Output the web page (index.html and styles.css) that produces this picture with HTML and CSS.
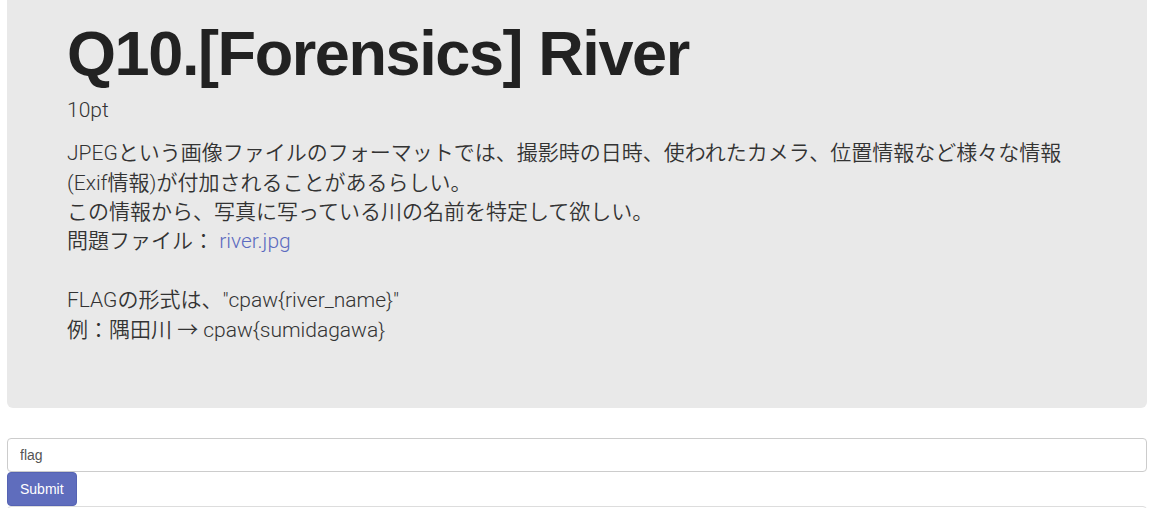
FILE: index.html
```html
<!DOCTYPE html>
<html lang="ja">
<head>
<meta charset="utf-8">
<title>Q10.[Forensics] River</title>
<link rel="stylesheet" href="styles.css">
</head>
<body>
<div class="page">
  <div class="jumbotron">
    <h1 class="title">Q10.[Forensics] River</h1>
    <p class="points">10pt</p>
    <p class="desc">JPEGという画像ファイルのフォーマットでは、撮影時の日時、使われたカメラ、位置情報など様々な情報(Exif情報)が付加されることがあるらしい。<br>この情報から、写真に写っている川の名前を特定して欲しい。<br>問題ファイル： <a class="link" href="#">river.jpg</a><br><br>FLAGの形式は、"cpaw{river_name}"<br>例：隅田川 <span class="arrow">→</span> cpaw{sumidagawa}</p>
  </div>
  <form class="flag-form">
    <input class="flag-input" type="text" placeholder="flag">
    <button class="btn-submit" type="button">Submit</button>
  </form>
  <div class="next-box"></div>
</div>
</body>
</html>
```
FILE: styles.css
```css
html, body {
  margin: 0;
  padding: 0;
  background: #ffffff;
}
body {
  font-family: "Liberation Sans", "Noto Sans CJK JP", sans-serif;
  color: #333333;
  font-size: 14px;
  line-height: 1.42857;
}
.page {
  padding: 0 9px 0 7px;
}
.jumbotron {
  background: #e9e9e9;
  border-radius: 0 0 6px 6px;
  padding: 18.5px 60px 48px 60px;
  margin-bottom: 30px;
}
.title {
  margin: 0 0 8px 0;
  font-size: 63px;
  line-height: 1.1;
  font-weight: 700;
  letter-spacing: -1.4px;
  color: #222222;
}
.points, .desc {
  font-family: Roboto, "Noto Sans CJK JP", sans-serif;
  font-size: 21px;
  line-height: 1.4;
  font-weight: 350;
  margin: 0 0 15px 0;
  color: #333333;
}
.points {
  margin-bottom: 14px;
}
.arrow {
  font-family: "Noto Sans CJK JP", sans-serif;
  line-height: 1;
}
.link {
  color: #5c6bc0;
  text-decoration: none;
}
.flag-form {
  margin: 0;
  display: flex;
  flex-direction: column;
  align-items: flex-start;
}
.flag-input {
  box-sizing: border-box;
  width: 100%;
  height: 34px;
  padding: 6px 12px;
  font-family: "Liberation Sans", sans-serif;
  font-size: 14px;
  color: #555555;
  background: #ffffff;
  border: 1px solid #cccccc;
  border-radius: 4px;
  margin: 0;
}
.flag-input::placeholder {
  color: #555555;
}
.btn-submit {
  box-sizing: border-box;
  height: 34px;
  padding: 6px 12px;
  font-family: "Liberation Sans", sans-serif;
  font-size: 14px;
  color: #ffffff;
  background: #5f6dbd;
  border: 1px solid #5563b3;
  border-radius: 4px;
  margin: 0;
}
.next-box {
  height: 40px;
  border: 1px solid #dddddd;
  border-radius: 4px;
}
```
